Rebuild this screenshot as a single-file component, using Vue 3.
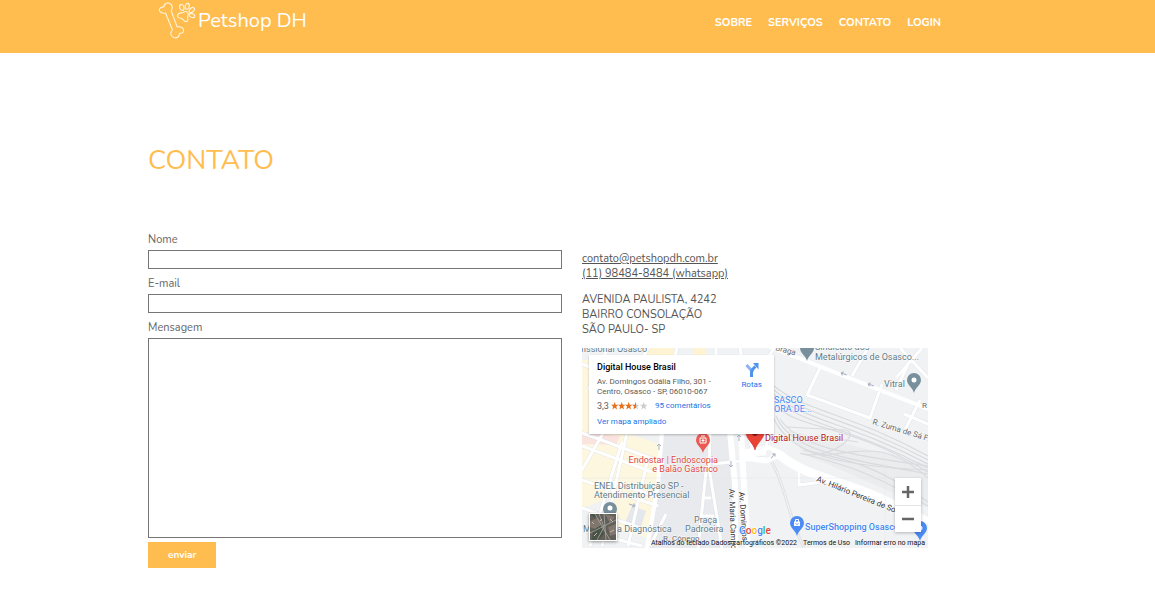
<script setup>
import { ref } from 'vue'

const nome = ref('')
const email = ref('')
const mensagem = ref('')

const links = ['Sobre', 'Serviços', 'Contato', 'Login']

const streets = [
  'M0 16L78 48', 'M0 85L82 115', 'M0 98L70 124', 'M0 132L76 158', 'M0 160L70 184', 'M20 198L46 80',
  'M46 198L66 110', 'M0 122L24 80', 'M8 198L40 94', 'M26 0L6 42', 'M66 0L60 12', 'M95 0L92 12', 'M134 0L134 12',
  'M158 0L160 12', 'M30 134L72 148', 'M0 182L60 198', 'M84 166L68 198',
  'M131 116L184 110', 'M128 86L127 120L140 200', 'M124 124L116 200', 'M118 168L132 168', 'M120 150L129 150',
  'M165 85L172 106', 'M186 86L184 104',
  'M238 20L225 47L288 70L300 36', 'M286 0L270 28', 'M340 0L314 30', 'M326 16L314 42', 'M338 52L322 84',
  'M322 66L346 76', 'M318 0L346 30', 'M217 124L217 137L240 134', 'M192 0L186 10'
]

const rails = [
  'M192 38C220 62 270 66 346 108', 'M192 42C220 67 268 70 346 112', 'M192 46C220 72 266 74 346 116',
  'M192 50C218 76 266 78 346 120', 'M192 55C216 84 262 72 346 124', 'M190 66C204 106 254 118 346 122',
  'M194 68C208 102 258 110 346 126', 'M198 71C216 98 260 106 346 118', 'M204 79L262 82C282 84 250 112 220 106',
  'M218 105C258 116 282 120 346 158', 'M222 102C268 112 296 118 346 154', 'M236 88L276 94', 'M240 108C290 100 310 98 346 130'
]

const arrows = [[262, 26, 200], [289, 37, 200], [77, 99, -90], [50, 157, 20], [157, 90, -90], [149, 116, 90], [191, 108, -50]]
</script>

<template>
  <header class="top">
    <div class="bar">
      <a class="brand" href="#">
        <svg width="40" height="40" viewBox="0 0 40 40" aria-hidden="true">
          <g fill="none" stroke="#fff3dc" stroke-width="1.1" stroke-linejoin="round">
            <path d="M8.500 13C5 14 1.500 11.500 2.500 9C3.300 6.800 5.500 7 7 6.800C6.800 3.500 11 1.800 13.800 4.200C16 6.500 15.300 9 14.200 11L20.200 27C23.500 26.200 27 28 26.600 30.800C26.300 33.300 24 33.600 22.500 33.300C22.800 36.500 20 38.600 16.800 37.600C13.200 36.200 13 32 15.400 29.800Z" />
            <path d="M21 14.300C22.800 12.200 24.600 13.500 26.600 12.200C28.500 11 31 11.500 31.300 13.700C31.500 15.400 30.200 16.400 30.800 18.200C31.500 20.400 30 22 28.200 21.500C26.600 21 26.200 18.600 23.800 18.300C21.200 18 19.400 16.400 21 14.300Z" />
            <ellipse cx="24.800" cy="7.500" rx="2.100" ry="3" transform="rotate(-18 24.800 7.500)" />
            <ellipse cx="30.200" cy="6.300" rx="2" ry="3" transform="rotate(14 30.200 6.300)" />
            <ellipse cx="34.800" cy="10" rx="2" ry="3" transform="rotate(48 34.800 10)" />
            <ellipse cx="35" cy="15.500" rx="1.900" ry="2.900" transform="rotate(-70 35 15.500)" />
          </g>
        </svg>
        <span>Petshop DH</span>
      </a>
      <nav class="nav">
        <a v-for="l in links" :key="l" href="#">{{ l }}</a>
      </nav>
    </div>
  </header>

  <main class="page">
    <h1>CONTATO</h1>
    <div class="columns">
      <form class="form" @submit.prevent>
        <label for="nome">Nome</label>
        <input id="nome" v-model="nome" type="text" />
        <label for="email">E-mail</label>
        <input id="email" v-model="email" type="email" />
        <label for="mensagem">Mensagem</label>
        <textarea id="mensagem" v-model="mensagem"></textarea>
        <button type="submit">enviar</button>
      </form>

      <section class="info">
        <div class="lines">
          <a href="mailto:contato@petshopdh.com.br">contato@petshopdh.com.br</a>
          <a href="tel:11984848484">(11) 98484-8484 (whatsapp)</a>
        </div>
        <address class="lines">
          <span>AVENIDA PAULISTA, 4242</span>
          <span>BAIRRO CONSOLAÇÃO</span>
          <span>SÃO PAULO- SP</span>
        </address>

        <div class="map">
          <svg class="canvas" viewBox="0 0 346 200" role="img" aria-label="Mapa">
            <defs>
              <path id="pin" d="M0 0C-1-5-7-8-7-13A7 7 0 0 1 7-13C7-8 1-5 0 0Z" />
            </defs>
            <rect width="346" height="200" fill="#f0f2f4" />
            <path d="M78 84H150V200H66L76 137Z" fill="#e8eaed" />
            <path d="M0 12H7V80H28L78 96L76 137L66 190L0 170Z" fill="#fef7e0" />
            <path d="M64 0H92V12H64ZM112 0H124V12H112Z" fill="#fef3d2" />
            <path d="M0 84L38 88L34 97L0 96Z" fill="#fbe3e0" />
            <path d="M0 160L28 150L20 200H0Z" fill="#f0f2f4" />
            <path d="M50 158L64 163L58 182L42 177Z" fill="#e4e7ec" />
            <path d="M206 82L346 116V160L222 106Z" fill="#eaecee" />
            <g fill="none" stroke="#d8dbde" stroke-width="1.200"><path v-for="d in rails" :key="d" :d="d" /></g>
            <path d="M190 114C204 140 206 168 222 200" fill="none" stroke="#dfe2e5" stroke-width="3" />
            <path d="M190 114C204 140 206 168 222 200" fill="none" stroke="#f4f5f6" stroke-width="1" />
            <g fill="none" stroke="#d9dde2" stroke-width="4"><path v-for="d in streets" :key="d" :d="d" stroke-opacity=".6" /></g>
            <g fill="none" stroke="#fff" stroke-width="3"><path v-for="d in streets" :key="d" :d="d" /></g>
            <g fill="none" stroke="#fff" stroke-linejoin="round">
              <path d="M186-2L346 61" stroke-width="4" />
              <path d="M80 84L76 137L65 200" stroke-width="4" />
              <path d="M148 84L153 137V200" stroke-width="6" />
              <path d="M159 84L162 137L166 200" stroke-width="6" />
              <path d="M162 106L187 102L198 107C222 128 258 132 298 150L346 174" stroke-width="9" />
              <path d="M162 110L184 113L200 106" stroke-width="5" />
            </g>
            <circle cx="187" cy="105" r="3" fill="#f0f2f4" />
            <path d="M0 130H346M303 84V200" stroke="#e5e8eb" stroke-opacity=".5" />
            <g v-for="(a, i) in arrows" :key="i" :transform="`translate(${a[0]} ${a[1]}) rotate(${a[2]})`">
              <path d="M-3 0H3M1-2L3 0L1 2" fill="none" stroke="#a7b0c4" />
            </g>

            <g fill="#78909c">
              <use href="#pin" x="225" y="13" /><use href="#pin" x="332" y="45" /><use href="#pin" x="28" y="174" />
            </g>
            <g fill="#fff"><circle cx="332" cy="32" r="2.500" /><circle cx="28" cy="160" r="2.500" /></g>
            <g fill="#ea5a52"><use href="#pin" x="121" y="105" /></g>
            <path d="M118 90H124V95H118ZM119 88H123M121 91V94M119.500 92.500H122.500" fill="none" stroke="#fff" />
            <path d="M173 102C171 94 164 92 164 84H182C182 92 175 94 173 102Z" fill="#ea4335" stroke="#c5221f" stroke-width=".5" />
            <circle cx="173" cy="85" r="3" fill="#8c1a16" />
            <g fill="#4c8bf5"><use href="#pin" x="215" y="188" /><use href="#pin" x="338" y="193" /></g>
            <path d="M212 173.500H218V178H212Z" fill="#fff" />
            <path d="M213.500 174V171.500H216.500V174" fill="none" stroke="#fff" />
            <path d="M213.500 175.500Q215 177.500 216.500 175.500" fill="none" stroke="#4c8bf5" stroke-width=".8" />
            <circle cx="338" cy="180" r="2.500" fill="#fff" />

            <g class="place" fill="#5f7a87">
              <text x="-1" y="4">fissional Osasco</text>
              <text x="233" y="2">Sindicato dos</text>
              <text x="233" y="12">Metalúrgicos de Osasco...</text>
              <text x="302" y="39">Vitral</text>
              <text x="12" y="141">ENEL Distribuição SP -</text>
              <text x="12" y="150">Atendimento Presencial</text>
              <text x="1" y="184">M</text>
              <text x="35" y="184">a Diagnóstica</text>
              <text x="112" y="175">Praça</text>
              <text x="103" y="184">Padroeira</text>
            </g>
            <g class="place" fill="#4285f4">
              <text x="192" y="55">SASCO</text>
              <text x="192" y="64">ORA DE...</text>
              <text class="strong" x="223" y="182">SuperShopping Osasco</text>
            </g>
            <g class="place" fill="#dc4b43">
              <text x="136" y="115" text-anchor="end">Endostar | Endoscopia</text>
              <text x="136" y="124" text-anchor="end">e Balão Gástrico</text>
              <text x="183" y="93" fill="#b31412">Digital House Brasil</text>
            </g>
            <g class="road">
              <text transform="translate(193 2) rotate(15)">Braga</text>
              <text transform="translate(290 76) rotate(17)">R. Zuma de Sá Freire</text>
              <text x="340" y="60">R</text>
              <text class="dark" transform="translate(234 133) rotate(22)">Av. Hilário Pereira de Souza</text>
              <text class="dark" transform="translate(147 141) rotate(88)">Av. Maria Campos</text>
              <text class="dark" transform="translate(157 144) rotate(86)">Av. Domingos</text>
              <text x="81" y="193">R. Cônego</text>
            </g>
            <text class="google" x="157" y="186"><tspan fill="#4285f4">G</tspan><tspan fill="#ea4335">o</tspan><tspan fill="#fbbc04">o</tspan><tspan fill="#4285f4">g</tspan><tspan fill="#34a853">l</tspan><tspan fill="#ea4335">e</tspan></text>
            <g class="legal">
              <text x="69" y="197">Atalhos do teclado</text>
              <text x="215" y="197" text-anchor="end">Dados cartográficos ©2022</text>
              <text x="268" y="197" text-anchor="end">Termos de Uso</text>
              <text x="343" y="197" text-anchor="end">Informar erro no mapa</text>
            </g>
          </svg>

          <div class="card">
            <div class="details">
              <strong>Digital House Brasil</strong>
              <p>Av. Domingos Odália Filho, 301 -<br />Centro, Osasco - SP, 06010-067</p>
              <div class="rating">
                <span>3,3</span>
                <svg width="38" height="8" viewBox="0 0 38 8" aria-hidden="true">
                  <defs>
                    <path id="star" d="M3.700 0L4.700 2.700L7.400 2.800L5.300 4.600L6 7.400L3.700 5.800L1.400 7.400L2.100 4.600L0 2.800L2.700 2.700Z" />
                    <linearGradient id="half"><stop offset=".5" stop-color="#e7711b" /><stop offset=".5" stop-color="#ccc" /></linearGradient>
                  </defs>
                  <use href="#star" fill="#e7711b" />
                  <use href="#star" x="7" fill="#e7711b" />
                  <use href="#star" x="14" fill="#e7711b" />
                  <use href="#star" x="21" fill="url(#half)" />
                  <use href="#star" x="29" fill="#ccc" />
                </svg>
                <a href="#">95 comentários</a>
              </div>
              <a href="#">Ver mapa ampliado</a>
            </div>
            <a class="routes" href="#">
              <svg width="14" height="14" viewBox="0 0 14 14" aria-hidden="true">
                <path d="M1.500 2L6.500 7.500" fill="none" stroke="#8ab4f8" stroke-width="3" />
                <path d="M6.500 14V9.500C6.500 6.500 8 5.500 10.500 3.500" fill="none" stroke="#4f94ec" stroke-width="3" />
                <path d="M8 0H13.500V6.500Z" fill="#4f94ec" />
              </svg>
              Rotas
            </a>
          </div>

          <button class="satellite" type="button" aria-label="Satélite">
            <svg width="26" height="26" viewBox="0 0 26 26" aria-hidden="true">
              <rect width="26" height="26" fill="#625f58" />
              <path d="M0 7L8 4L12 10L5 15L0 13ZM15 0L25 3L20 9ZM18 13L26 10V20L20 22Z" fill="#81776e" />
              <path d="M3 16L11 12L14 20L8 26H2ZM0 0H7L5 4Z" fill="#495348" />
              <path d="M9 0L14 13L7 26M14 0L16 26M0 19L26 6M5 0L20 26" fill="none" stroke="#a7aaa3" stroke-width=".8" />
              <path d="M2 8L4 10M20 5L23 8M4 22L7 19M20 18L24 16M10 7L12 5" stroke="#c4b7aa" />
            </svg>
          </button>
          <div class="zoom">
            <button type="button" aria-label="Aumentar zoom">
              <svg width="12" height="12" viewBox="0 0 12 12"><path d="M0 6H12M6 0V12" stroke="#666" stroke-width="2.500" /></svg>
            </button>
            <button type="button" aria-label="Diminuir zoom">
              <svg width="12" height="12" viewBox="0 0 12 12"><path d="M0 6H12" stroke="#666" stroke-width="2.500" /></svg>
            </button>
          </div>
        </div>
      </section>
    </div>
  </main>
</template>

<style>
body {
  margin: 0;
  background: #fff;
  font-family: Nunito, Lato, sans-serif;
}
</style>

<style scoped>
.top {
  background: #ffbd50;
}
.bar {
  box-sizing: border-box;
  max-width: 859px;
  height: 53px;
  margin: 0 auto;
  padding: 0 66px 0 9px;
  display: flex;
  justify-content: space-between;
  align-items: flex-start;
}
.brand {
  display: flex;
  align-items: flex-start;
  gap: 1px;
  color: #fff;
  font-size: 20px;
  line-height: 42px;
  text-decoration: none;
}
.nav {
  display: flex;
  gap: 16px;
}
.nav a {
  color: #fff;
  font-size: 11px;
  font-weight: 700;
  line-height: 46px;
  text-decoration: none;
  text-transform: uppercase;
}
.page {
  max-width: 859px;
  margin: 0 auto;
  padding: 88px 0 40px;
  color: #666;
}
h1 {
  margin: 0 0 51px;
  color: #ffbd50;
  font-size: 27px;
  font-weight: 400;
  line-height: 40px;
}
.columns {
  display: grid;
  grid-template-columns: 414fr 425fr;
  gap: 20px;
}
.form {
  display: flex;
  flex-direction: column;
  font-size: 11px;
  line-height: 15px;
}
.form label {
  margin-bottom: 3px;
}
.form input,
.form textarea {
  box-sizing: border-box;
  width: 100%;
  margin: 0 0 7px;
  padding: 1px 4px;
  border: 1px solid #767676;
  border-radius: 0;
  background: #fff;
  font: inherit;
}
.form input {
  height: 19px;
}
.form textarea {
  height: 200px;
  margin-bottom: 4px;
  resize: none;
}
.form button {
  align-self: flex-start;
  padding: 0 20px;
  border: 0;
  background: #ffbd50;
  color: #fff;
  font-family: inherit;
  font-size: 10px;
  font-weight: 700;
  line-height: 26px;
}
.info {
  display: flex;
  flex-direction: column;
  gap: 11px;
  padding-top: 19px;
  font-size: 11px;
  line-height: 15px;
}
.lines {
  display: flex;
  flex-direction: column;
  align-items: flex-start;
  color: #555;
  font-style: normal;
}
.lines a {
  color: inherit;
}
.map {
  position: relative;
  max-width: 346px;
  overflow: hidden;
  font-family: Roboto, sans-serif;
}
.canvas {
  display: block;
  width: 100%;
}
.place {
  font-size: 9px;
  stroke: #fff;
  stroke-width: 1px;
  stroke-opacity: 0.8;
  paint-order: stroke;
}
.strong {
  font-weight: 500;
}
.road {
  fill: #666;
  font-size: 8px;
  stroke: #fff;
  stroke-width: 1px;
  paint-order: stroke;
}
.dark {
  fill: #333;
}
.google {
  font-size: 10px;
  font-weight: 500;
  stroke: #fff;
  stroke-width: 1px;
  paint-order: stroke;
}
.legal {
  fill: #111;
  font-size: 7px;
}
.card {
  position: absolute;
  top: 7px;
  left: 7px;
  box-sizing: border-box;
  width: 185px;
  height: 79px;
  padding: 6px 12px 0 8px;
  display: flex;
  justify-content: space-between;
  background: #fff;
  box-shadow: 0 1px 2px rgba(0, 0, 0, 0.25);
  color: #5b5b5b;
  font-size: 8px;
  line-height: 10px;
  white-space: nowrap;
}
.card strong {
  display: block;
  color: #000;
  font-size: 9px;
  font-weight: 500;
  line-height: 12px;
}
.card p {
  margin: 4px 0;
}
.card a {
  color: #1a73e8;
  text-decoration: none;
}
.rating {
  display: flex;
  align-items: center;
  gap: 2px;
  margin-bottom: 6px;
}
.rating span {
  font-size: 9px;
}
.rating a {
  margin-left: 4px;
}
.routes {
  display: flex;
  flex-direction: column;
  align-items: center;
  gap: 3px;
  padding-top: 2px;
}
.satellite {
  position: absolute;
  left: 7px;
  bottom: 7px;
  padding: 0;
  border: 1px solid #fff;
  background: #fff;
  box-shadow: 0 1px 3px rgba(0, 0, 0, 0.4);
}
.satellite svg {
  display: block;
}
.zoom {
  position: absolute;
  right: 7px;
  bottom: 16px;
  width: 26px;
  background: #fff;
  box-shadow: 0 1px 3px rgba(0, 0, 0, 0.25);
}
.zoom button {
  display: flex;
  align-items: center;
  justify-content: center;
  width: 100%;
  height: 27px;
  padding: 0;
  border: 0;
  background: none;
}
.zoom button + button {
  border-top: 1px solid #e3e3e3;
}
</style>
